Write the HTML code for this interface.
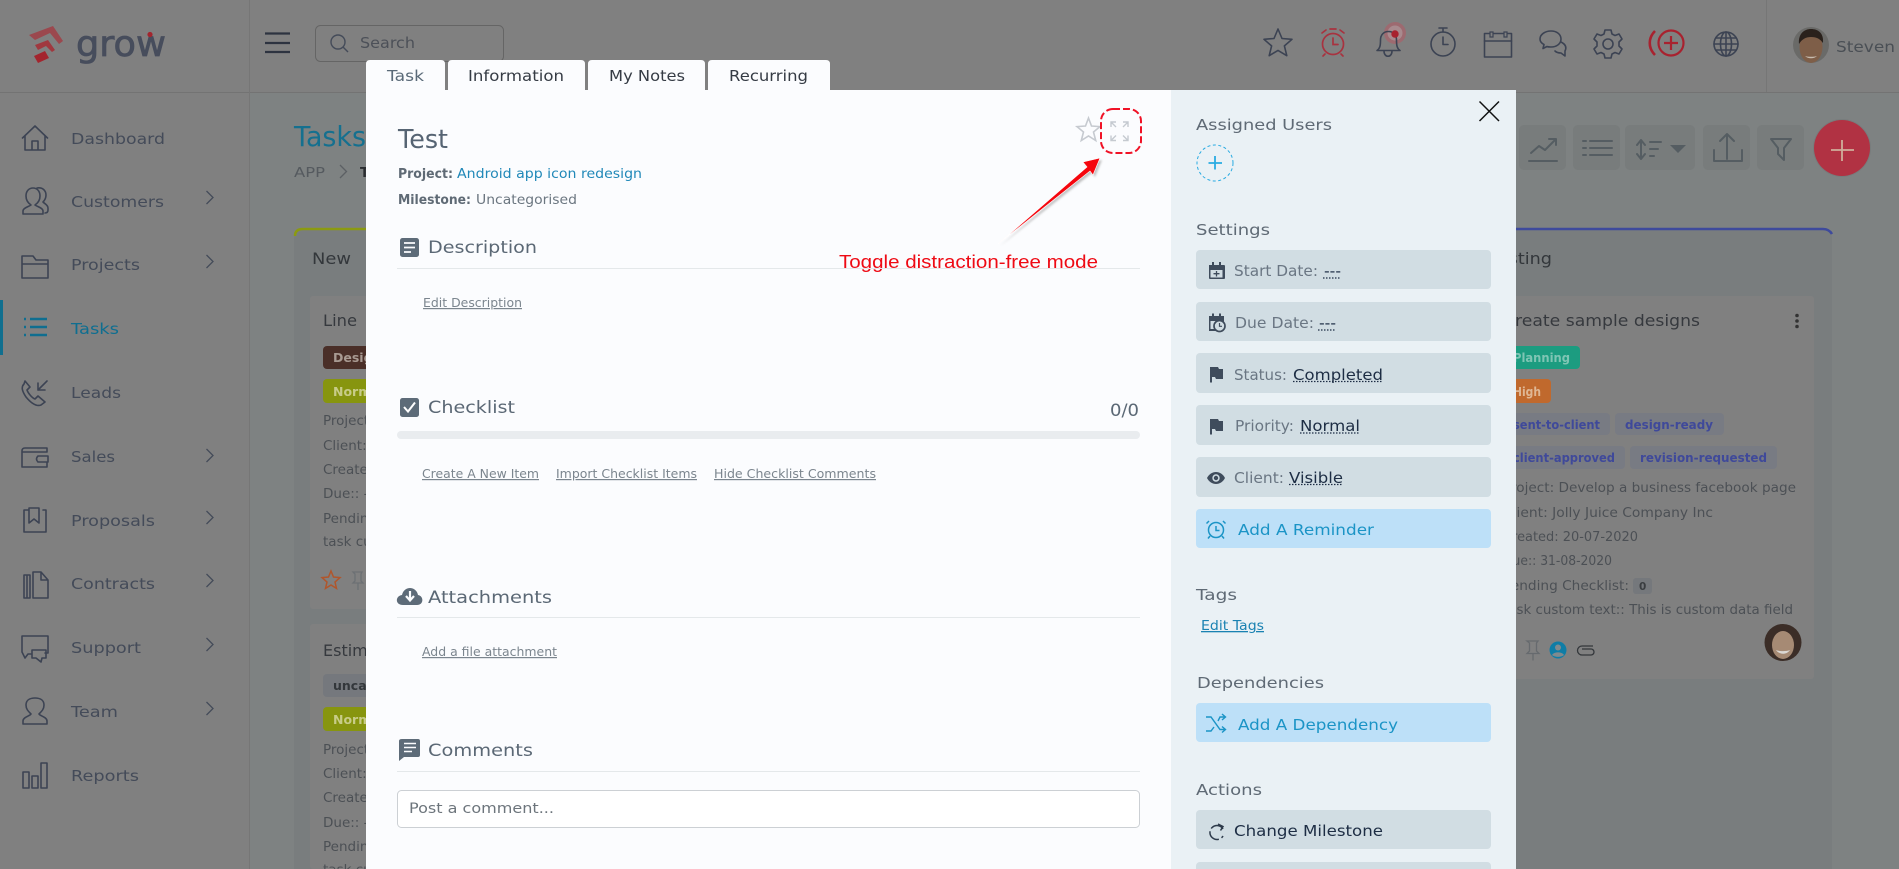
<!DOCTYPE html>
<html lang="en">
<head>
<meta charset="utf-8">
<title>Tasks - Grow</title>
<style>
html,body{margin:0;padding:0;width:1899px;height:869px;overflow:hidden;background:#808080}
svg{display:block}
text{font-family:"DejaVu Sans","Liberation Sans",sans-serif;white-space:pre}
.nav{font-size:15.5px;fill:#444b59}
.cd{font-size:13.5px;fill:#4c5055}
.tg{font-size:12.5px;font-weight:bold}
.sec{font-size:17px;fill:#5b6875}
.side{font-size:15.5px;fill:#5f6a75}
.lk{font-size:12px;fill:#7b858e;text-decoration:underline}
.row{font-size:15.5px;fill:#6a7683}
.val{font-size:15.5px;fill:#1d2d44}
.ic{fill:none;stroke:#3c4353;stroke-width:1.6;stroke-linejoin:round;stroke-linecap:round}
.tb{fill:none;stroke:#555d62;stroke-width:2;stroke-linejoin:round;stroke-linecap:round}
.sd{fill:#3f4c5c}
</style>
</head>
<body>
<svg xmlns="http://www.w3.org/2000/svg" width="1899" height="869" viewBox="0 0 1899 869">
<!-- page behind overlay -->
<rect width="1899" height="869" fill="#808080"/>
<rect x="250" y="93" width="1649" height="776" fill="#7e8282"/>
<rect x="0" y="92" width="1899" height="1" fill="#737373"/>
<rect x="249" y="0" width="1" height="869" fill="#767676"/>
<rect x="1766" y="0" width="1" height="92" fill="#767676"/>

<!-- logo -->
<polygon points="29,35 53,26 63,41 59,44 50,33 35,40" fill="#9b484e"/>
<polygon points="35,45 48,40 55,50 52,52 46,46 38,50" fill="#a0383f"/>
<polygon points="34,56 45,51 49,58 38,63" fill="#a3252e"/>
<text x="76" y="56" font-size="36" fill="#474d5c" stroke="#474d5c" stroke-width=".8" textLength="90" lengthAdjust="spacingAndGlyphs">grow</text>
<circle cx="150" cy="34.500" r="2.600" fill="#a3252e"/>

<!-- hamburger + search -->
<path d="M265 33.500H290M265 43H290M265 52H290" stroke="#2d3340" stroke-width="2.200" fill="none"/>
<rect x="315.500" y="25.500" width="188" height="36" rx="5" fill="none" stroke="#656565"/>
<circle cx="338" cy="42" r="7" fill="none" stroke="#444b59" stroke-width="1.400"/>
<path d="M343 47L348 52" stroke="#444b59" stroke-width="1.400"/>
<text x="360" y="48" font-size="15" fill="#4c5058" textLength="55" lengthAdjust="spacingAndGlyphs">Search</text>

<!-- top icons -->
<path class="ic" d="M1278 29l4 9.500 10 .8-7.600 6.600 2.400 9.800-8.800-5.300-8.800 5.300 2.400-9.800-7.600-6.600 10-.8z"/>
<g fill="none" stroke="#a8323f" stroke-width="1.700" stroke-linecap="round">
<circle cx="1333" cy="44" r="10.500"/><path d="M1333 38v6.500h5M1322 33l4-3M1344 33l-4-3M1325 54l-2 2M1341 54l2 2M1330 29h6"/>
</g>
<circle cx="1395" cy="33" r="11" fill="#9d6a70"/>
<circle cx="1395" cy="33" r="7.500" fill="#a88a8e"/>
<path class="ic" d="M1377 50.500c3-2 3.500-5 3.500-10.500 0-5 3-8.500 8-8.500s8 3.500 8 8.500c0 5.500 .5 8.500 3.500 10.500zM1384 51c0 7 8 7 8 0"/>
<circle cx="1395" cy="34" r="3.700" fill="#a8222f"/>
<circle class="ic" cx="1443" cy="44" r="12"/><path class="ic" d="M1443 37v7.500h5M1439 28h8M1443 28v4"/>
<rect class="ic" x="1484.500" y="33.500" width="27" height="23.500"/><path class="ic" d="M1484.500 41h27"/><path d="M1490 32h3v5h-3zM1504 32h3v5h-3z" fill="#808080" stroke="#3c4353" stroke-width="1.200"/>
<path class="ic" d="M1551 31c6 0 10 3.500 10 8s-4 8-10 8c-1.500 0-3 0-4-.5l-4 2 1-4c-3-1.500-4-3.500-4-5.500 0-4.500 5-8 11-8zM1561 42c4 2 6 5 4 9l0 5-4-3c-3 0-5-1-6-2"/>
<g class="ic"><circle cx="1608" cy="44" r="5"/><path d="M1605 30h6l1 4 3 1.500 4-1.500 3 5-3 3v4l3 3-3 5-4-1.500-3 1.500-1 4h-6l-1-4-3-1.500-4 1.500-3-5 3-3v-4l-3-3 3-5 4 1.500 3-1.500z"/></g>
<g fill="none" stroke="#a8222f" stroke-width="2.200">
<circle cx="1671" cy="43" r="12.500"/><path d="M1671 36v14M1664 43h14"/><path d="M1655 31c-7 7-7 17 0 24" stroke-width="2.600"/>
</g>
<g class="ic" stroke-width="1.400"><circle cx="1726" cy="44" r="12"/><ellipse cx="1726" cy="44" rx="5.500" ry="12"/><path d="M1726 32v24M1714 44h24M1716 38h20M1716 50h20"/></g>
<!-- avatar -->
<circle cx="1811" cy="45" r="18" fill="#6a6a68"/>
<ellipse cx="1811" cy="47" rx="11.500" ry="16" fill="#7e5e48"/>
<path d="M1799 44c-1-10 5-15 12-15s13 4 12 14c-3-4-6-6-12-6-5 0-9 2-12 7z" fill="#2a211c"/>
<path d="M1805 56c3 3 9 3 12 0-3 1-9 1-12 0z" fill="#c8bcb0"/>
<text x="1836" y="52" font-size="15.500" fill="#4a4f55" textLength="59" lengthAdjust="spacingAndGlyphs">Steven</text>

<!-- sidebar -->
<rect x="0" y="300" width="3" height="55" fill="#106f8f"/>
<text class="nav" x="71" y="144" textLength="94" lengthAdjust="spacingAndGlyphs">Dashboard</text>
<text class="nav" x="71" y="207" textLength="93" lengthAdjust="spacingAndGlyphs">Customers</text>
<text class="nav" x="71" y="270" textLength="69" lengthAdjust="spacingAndGlyphs">Projects</text>
<text class="nav" x="71" y="334" textLength="48" lengthAdjust="spacingAndGlyphs" style="fill:#0f6e90">Tasks</text>
<text class="nav" x="71" y="398" textLength="50" lengthAdjust="spacingAndGlyphs">Leads</text>
<text class="nav" x="71" y="462" textLength="44" lengthAdjust="spacingAndGlyphs">Sales</text>
<text class="nav" x="71" y="526" textLength="84" lengthAdjust="spacingAndGlyphs">Proposals</text>
<text class="nav" x="71" y="589" textLength="84" lengthAdjust="spacingAndGlyphs">Contracts</text>
<text class="nav" x="71" y="653" textLength="70" lengthAdjust="spacingAndGlyphs">Support</text>
<text class="nav" x="71" y="717" textLength="47" lengthAdjust="spacingAndGlyphs">Team</text>
<text class="nav" x="71" y="781" textLength="68" lengthAdjust="spacingAndGlyphs">Reports</text>
<g fill="none" stroke="#444b59" stroke-width="1.300">
<path d="M206.500 191l6.500 6.500-6.500 6.500M206.500 255l6.500 6.500-6.500 6.500M206.500 449l6.500 6.500-6.500 6.500M206.500 511l6.500 6.500-6.500 6.500M206.500 574l6.500 6.500-6.500 6.500M206.500 638l6.500 6.500-6.500 6.500M206.500 702l6.500 6.500-6.500 6.500"/>
</g>
<g class="ic">
<path d="M22.500 138L35 126l12.500 12M25 136v14h20v-14M32 150v-9h6v9"/>
<path d="M23 214v-3c0-3 5-4 8-6-3-2-5-5-5-9 0-5 3-8 7-8s7 3 7 8c0 4-2 7-5 9 3 2 8 3 8 6v3zM37 188c6-1 9 3 9 7 0 3-1 5-3 7 2 2 5 3 5 6v2c0 2-1 3-3 3"/>
<path d="M22 278V256h11l3 4h12v18zM22 264h26"/>
<path d="M24 384c-3 3-2 7 2 13 5 6 10 10 15 8l4-3-7-6-3 3c-3-1-7-6-8-9l3-3-5-6zM47 381l-9 9M38 383v7h7"/>
<path d="M47 452v-4H25c-2 0-3 1-3 3v16h25v-5M38 456h10v6H38c-2-2-2-4 0-6zM22 452h25"/>
<path d="M29 510h-5v22h22v-22h-3M29 508v15l5-4 5 4v-15z"/>
<path d="M33 572h8l7 8v18H33zM41 572v8h7M24 575h6v23h-6zM27 575v23"/>
<path d="M22 636h26v17h-3M22 636v16l3 6 3-4h3M32 650h14v8h-4l-1 4-5-4h-4z"/>
<path d="M23 724v-3c0-4 7-5 8-7-3-3-5-5-5-9 0-5 4-7 9-7s9 2 9 7c0 4-2 6-5 9 1 2 8 3 8 7v3z"/>
<path d="M23 772h6v16h-6zM32 776h6v12h-6zM41 763h6v25h-6z"/>
</g>
<path d="M24 319h2M24 327h2M24 335h2M30 319h17M30 327h17M30 335h17" stroke="#0f6e90" stroke-width="2.600" fill="none"/>

<!-- heading -->
<text x="294" y="146" font-size="28" fill="#15708f" textLength="72" lengthAdjust="spacingAndGlyphs">Tasks</text>
<text x="294" y="177" font-size="13.500" fill="#555a5f" textLength="31" lengthAdjust="spacingAndGlyphs">APP</text>
<path d="M340 165l6.500 6.500-6.500 6.500" fill="none" stroke="#5c6064" stroke-width="1.300"/>
<text x="360" y="177" font-size="13.500" font-weight="bold" fill="#2a2d30">T</text>

<!-- column 1 -->
<path d="M294 240q0-11 9-11h360v640H294z" fill="#797d7e"/>
<path d="M295 236q0-7 8-7h70" fill="none" stroke="#8b9a11" stroke-width="2.500"/>
<text x="312" y="264" font-size="16" fill="#33373b" textLength="39" lengthAdjust="spacingAndGlyphs">New</text>
<rect x="310" y="296" width="300" height="313" rx="3" fill="#808080"/>
<text x="323" y="326" font-size="16" fill="#36393e" textLength="34" lengthAdjust="spacingAndGlyphs">Line</text>
<rect x="323" y="346" width="70" height="23" rx="4" fill="#4a2f28"/>
<text class="tg" x="333" y="362" fill="#a89a92">Design</text>
<rect x="323" y="379" width="70" height="24" rx="4" fill="#87950f"/>
<text class="tg" x="333" y="396" fill="#c8cc88">Normal</text>
<text class="cd" x="323" y="425">Project</text>
<text class="cd" x="323" y="450">Client:</text>
<text class="cd" x="323" y="474">Created</text>
<text class="cd" x="323" y="498">Due:: -</text>
<text class="cd" x="323" y="523">Pending</text>
<text class="cd" x="323" y="546">task cu</text>
<path d="M331 571l2.500 6 6.500.6-5 4.400 1.500 6.400-5.500-3.400-5.500 3.400 1.500-6.400-5-4.400 6.500-.6z" fill="none" stroke="#b0562c" stroke-width="1.500"/>
<path d="M353 572h9l-1 2v7l2 2h-5v7-7h-5l2-2v-7z" fill="none" stroke="#6c7074" stroke-width="1.300"/>
<rect x="310" y="624" width="300" height="245" rx="3" fill="#808080"/>
<text x="323" y="656" font-size="16" fill="#36393e">Estim</text>
<rect x="323" y="674" width="70" height="23" rx="4" fill="#75787d"/>
<text class="tg" x="333" y="690" fill="#33373b">uncat</text>
<rect x="323" y="707" width="70" height="24" rx="4" fill="#87950f"/>
<text class="tg" x="333" y="724" fill="#c8cc88">Normal</text>
<text class="cd" x="323" y="754">Project</text>
<text class="cd" x="323" y="778">Client:</text>
<text class="cd" x="323" y="802">Created</text>
<text class="cd" x="323" y="827">Due:: -</text>
<text class="cd" x="323" y="851">Pending</text>
<text class="cd" x="323" y="874">task cu</text>

<!-- toolbar -->
<g fill="#787c7c">
<rect x="1519" y="125" width="47" height="45" rx="5"/>
<rect x="1573" y="125" width="47" height="45" rx="5"/>
<rect x="1625" y="125" width="70" height="45" rx="5"/>
<rect x="1703" y="125" width="47" height="45" rx="5"/>
<rect x="1757" y="125" width="47" height="45" rx="5"/>
</g>
<path class="tb" d="M1529 161h28M1531 153l8-7 6 4 11-11M1549 139h7v6"/>
<path class="tb" d="M1590 141h22M1590 148h22M1590 155h22M1583 141h3M1583 148h3M1583 155h3" stroke-width="2.300"/>
<path class="tb" d="M1641 141v17M1637 145l4-5 4 5M1637 154l4 5 4-5M1650 142h11M1650 149h8M1650 156h4"/>
<polygon points="1670,145 1686,145 1678,153" fill="#555d62"/>
<path class="tb" d="M1727 159v-23M1720 141l7-7 7 7M1714 150v11h28v-11"/>
<path class="tb" d="M1771 139h20l-7 9v12l-6-6v-6z"/>
<circle cx="1842" cy="148" r="29" fill="#6f7575" opacity=".45"/>
<ellipse cx="1842" cy="148" rx="28" ry="28" fill="#b13243"/>
<path d="M1842 140v21M1831 150h23" stroke="#cfae9b" stroke-width="1.800"/>

<!-- right column -->
<path d="M1470 229h353q9 0 9 10v630h-362z" fill="#797d7e"/>
<path d="M1470 229h353q6 0 9 5" fill="none" stroke="#3e4a9c" stroke-width="2.500"/>
<text x="1490" y="264" font-size="16" fill="#33373b" textLength="62" lengthAdjust="spacingAndGlyphs">Testing</text>
<rect x="1490" y="296" width="324" height="383" rx="3" fill="#808080"/>
<text x="1503" y="326" font-size="16" fill="#36393e" textLength="197" lengthAdjust="spacingAndGlyphs">Create sample designs</text>
<g fill="#333"><circle cx="1797" cy="315.500" r="1.800"/><circle cx="1797" cy="321" r="1.800"/><circle cx="1797" cy="326.500" r="1.800"/></g>
<rect x="1503" y="346" width="77" height="23" rx="4" fill="#1c9c80"/>
<text class="tg" x="1513" y="362" fill="#7fc5b4" textLength="57" lengthAdjust="spacingAndGlyphs">Planning</text>
<rect x="1503" y="379" width="48" height="24" rx="4" fill="#c0692d"/>
<text class="tg" x="1513" y="396" fill="#dfb794" textLength="28" lengthAdjust="spacingAndGlyphs">High</text>
<g fill="#787b83">
<rect x="1503" y="413" width="107" height="22" rx="4"/><rect x="1615" y="413" width="109" height="22" rx="4"/>
<rect x="1503" y="446" width="122" height="23" rx="4"/><rect x="1630" y="446" width="147" height="23" rx="4"/>
</g>
<text class="tg" x="1513" y="429" fill="#3f499a" textLength="87" lengthAdjust="spacingAndGlyphs">sent-to-client</text>
<text class="tg" x="1625" y="429" fill="#3f499a" textLength="88" lengthAdjust="spacingAndGlyphs">design-ready</text>
<text class="tg" x="1513" y="462" fill="#3f499a" textLength="102" lengthAdjust="spacingAndGlyphs">client-approved</text>
<text class="tg" x="1640" y="462" fill="#3f499a" textLength="127" lengthAdjust="spacingAndGlyphs">revision-requested</text>
<text class="cd" x="1503" y="492" textLength="293" lengthAdjust="spacingAndGlyphs">Project: Develop a business facebook page</text>
<text class="cd" x="1503" y="517" textLength="210" lengthAdjust="spacingAndGlyphs">Client: Jolly Juice Company Inc</text>
<text class="cd" x="1503" y="541" textLength="135" lengthAdjust="spacingAndGlyphs">Created: 20-07-2020</text>
<text class="cd" x="1503" y="565" textLength="109" lengthAdjust="spacingAndGlyphs">Due:: 31-08-2020</text>
<text class="cd" x="1503" y="590" textLength="126" lengthAdjust="spacingAndGlyphs">Pending Checklist:</text>
<rect x="1633" y="578" width="19" height="16" rx="3" fill="#75787c"/>
<text x="1639" y="590" font-size="10.500" font-weight="bold" fill="#3a3d40">0</text>
<text class="cd" x="1503" y="614" textLength="290" lengthAdjust="spacingAndGlyphs">task custom text:: This is custom data field</text>
<path d="M1527 641h11l-1.500 2v8l2.500 2.500h-6v7-7h-6l2.500-2.500v-8z" fill="none" stroke="#666a6e" stroke-width="1.300"/>
<circle cx="1558" cy="650" r="8.500" fill="#0f7da6"/>
<circle cx="1558" cy="647.500" r="3" fill="#808a8e"/>
<path d="M1552 655c2-3.500 10-3.500 12 0-3 2.500-9 2.500-12 0z" fill="#808a8e"/>
<path d="M1593 646h-11a4.500 4.500 0 000 9h9a3 3 0 000-6h-9" fill="none" stroke="#33373b" stroke-width="1.300"/>
<circle cx="1783" cy="642.500" r="18.500" fill="#3b2d27"/>
<ellipse cx="1783" cy="645" rx="11" ry="14" fill="#a68a74"/>
<path d="M1776 650c3 5 11 5 14 0-3 1.500-11 1.500-14 0z" fill="#dcd8d4"/>

<!-- modal tabs -->
<g fill="#fbfcfe">
<path d="M366 90V64q0-4 4-4h71q4 0 4 4v26z"/>
<path d="M448 90V64q0-4 4-4h129q4 0 4 4v26z"/>
<path d="M588 90V64q0-4 4-4h109q4 0 4 4v26z"/>
<path d="M708 90V64q0-4 4-4h114q4 0 4 4v26z"/>
</g>
<text x="387" y="81" font-size="15" fill="#5a6a78" textLength="37" lengthAdjust="spacingAndGlyphs">Task</text>
<text x="468" y="81" font-size="15" fill="#353b44" textLength="96" lengthAdjust="spacingAndGlyphs">Information</text>
<text x="609" y="81" font-size="15" fill="#353b44" textLength="76" lengthAdjust="spacingAndGlyphs">My Notes</text>
<text x="729" y="81" font-size="15" fill="#353b44" textLength="79" lengthAdjust="spacingAndGlyphs">Recurring</text>

<!-- modal main -->
<rect x="366" y="90" width="805" height="779" fill="#fbfcfe"/>
<rect x="1171" y="90" width="345" height="779" fill="#eaf1f5"/>

<text x="398" y="148" font-size="26" fill="#566473" textLength="50" lengthAdjust="spacingAndGlyphs">Test</text>
<text x="398" y="178" font-size="13.500" font-weight="bold" fill="#5f6a75" textLength="55" lengthAdjust="spacingAndGlyphs">Project:</text>
<text x="457" y="178" font-size="13.500" fill="#2088b8" textLength="185" lengthAdjust="spacingAndGlyphs">Android app icon redesign</text>
<text x="398" y="204" font-size="13.500" font-weight="bold" fill="#5f6a75" textLength="73" lengthAdjust="spacingAndGlyphs">Milestone:</text>
<text x="476" y="204" font-size="13.500" fill="#6b7680" textLength="101" lengthAdjust="spacingAndGlyphs">Uncategorised</text>

<!-- star + expand + annotation -->
<path d="M1088.500 118l3 8 8.500.6-6.500 5.400 2.200 8.500-7.200-4.600-7.200 4.600 2.200-8.500-6.500-5.400 8.500-.6z" fill="none" stroke="#c6cad0" stroke-width="1.600"/>
<path d="M1111 127v-5h5M1128 127v-5h-5M1111 135.500v5h5M1128 135.500v5h-5M1111 122l5 5M1128 122l-5 5M1111 140.500l5-5M1128 140.500l-5-5" fill="none" stroke="#c5cad0" stroke-width="1.400"/>
<rect x="1101" y="109" width="40" height="44" rx="12" fill="none" stroke="#f01226" stroke-width="2" stroke-dasharray="7 3"/>
<polygon points="998,244 1087,167 1083,162 1100,158 1093,175 1090,171" fill="#9a9a9a" opacity=".6" transform="translate(2 2)" style="filter:blur(1px)"/>
<polygon points="998,244 1087,167 1083,162 1100,158 1093,175 1090,171" fill="#f5060e" stroke="#fff" stroke-width=".6"/>
<text x="839" y="268" font-size="18" fill="#ee0a14" style="font-family:'Liberation Sans',Arial,sans-serif" textLength="259" lengthAdjust="spacingAndGlyphs">Toggle distraction-free mode</text>

<!-- description -->
<rect x="400" y="238" width="19" height="19" rx="2.500" fill="#5d6b78"/>
<path d="M404 243h11M404 247.500h11M404 252h7" stroke="#fbfcfe" stroke-width="1.800"/>
<text class="sec" x="428" y="253" textLength="109" lengthAdjust="spacingAndGlyphs">Description</text>
<rect x="397" y="268" width="743" height="1" fill="#e4e8ea"/>
<text class="lk" x="423" y="307" textLength="99" lengthAdjust="spacingAndGlyphs">Edit Description</text>

<!-- checklist -->
<rect x="400" y="398" width="19" height="19" rx="2.500" fill="#5d6b78"/>
<path d="M404 407l4 4.500 7-9" fill="none" stroke="#fff" stroke-width="2"/>
<text class="sec" x="428" y="413" textLength="87" lengthAdjust="spacingAndGlyphs">Checklist</text>
<text x="1110" y="416" font-size="17" fill="#5b6875" textLength="29" lengthAdjust="spacingAndGlyphs">0/0</text>
<rect x="397" y="431" width="743" height="8" rx="4" fill="#e9ecef"/>
<text class="lk" x="422" y="478" textLength="117" lengthAdjust="spacingAndGlyphs">Create A New Item</text>
<text class="lk" x="556" y="478" textLength="141" lengthAdjust="spacingAndGlyphs">Import Checklist Items</text>
<text class="lk" x="714" y="478" textLength="162" lengthAdjust="spacingAndGlyphs">Hide Checklist Comments</text>

<!-- attachments -->
<path d="M403 605c-8 0-8-9-1-10 1-5 5-7 8-7s7 2 8 7c6 1 6 10-1 10z" fill="#5d6b78"/>
<path d="M410 591v8M406 596l4 4.500 4-4.500" stroke="#fbfcfe" stroke-width="2.200" fill="none"/>
<text class="sec" x="428" y="603" textLength="124" lengthAdjust="spacingAndGlyphs">Attachments</text>
<rect x="397" y="617" width="743" height="1" fill="#e4e8ea"/>
<text class="lk" x="422" y="656" textLength="135" lengthAdjust="spacingAndGlyphs">Add a file attachment</text>

<!-- comments -->
<path d="M402 739h16q2 0 2 2v14q0 2-2 2h-14l-5 4v-20q0-2 3-2z" fill="#5d6b78"/>
<path d="M404 743.500h12M404 747.500h12M404 751.500h8" stroke="#fbfcfe" stroke-width="1.600"/>
<text class="sec" x="428" y="756" textLength="105" lengthAdjust="spacingAndGlyphs">Comments</text>
<rect x="397" y="771" width="743" height="1" fill="#e4e8ea"/>
<rect x="397.500" y="790.500" width="742" height="37" rx="4" fill="#fff" stroke="#ccd0d4"/>
<text x="409" y="813" font-size="14.500" fill="#6d757c" textLength="145" lengthAdjust="spacingAndGlyphs">Post a comment...</text>

<!-- aside -->
<path d="M1479.500 101.500l19.500 19.500M1499 101.500l-19.500 19.500" stroke="#111" stroke-width="1.500"/>
<text class="side" x="1196" y="130" textLength="136" lengthAdjust="spacingAndGlyphs">Assigned Users</text>
<circle cx="1215" cy="163" r="18" fill="none" stroke="#29abe2" stroke-width="1" stroke-dasharray="3 2.500"/>
<path d="M1215 156v13.500M1208.500 163h13.500" stroke="#29abe2" stroke-width="1.800"/>
<text class="side" x="1196" y="235" textLength="74" lengthAdjust="spacingAndGlyphs">Settings</text>

<g fill="#d1dde3">
<rect x="1196" y="250" width="295" height="39" rx="4"/>
<rect x="1196" y="302" width="295" height="39" rx="4"/>
<rect x="1196" y="353" width="295" height="40" rx="4"/>
<rect x="1196" y="405" width="295" height="40" rx="4"/>
<rect x="1196" y="457" width="295" height="40" rx="4"/>
<rect x="1196" y="810" width="295" height="39" rx="4"/>
<rect x="1196" y="862" width="295" height="20" rx="4"/>
</g>
<g fill="#bde0f8">
<rect x="1196" y="509" width="295" height="39" rx="4"/>
<rect x="1196" y="703" width="295" height="39" rx="4"/>
</g>

<text class="row" x="1234" y="276" textLength="84" lengthAdjust="spacingAndGlyphs">Start Date:</text>
<text class="val" x="1324" y="276" textLength="17" lengthAdjust="spacingAndGlyphs">---</text>
<text class="row" x="1235" y="328" textLength="79" lengthAdjust="spacingAndGlyphs">Due Date:</text>
<text class="val" x="1319" y="328" textLength="17" lengthAdjust="spacingAndGlyphs">---</text>
<text class="row" x="1234" y="380" textLength="53" lengthAdjust="spacingAndGlyphs">Status:</text>
<text class="val" x="1293" y="380" textLength="90" lengthAdjust="spacingAndGlyphs">Completed</text>
<text class="row" x="1235" y="431" textLength="59" lengthAdjust="spacingAndGlyphs">Priority:</text>
<text class="val" x="1300" y="431" textLength="60" lengthAdjust="spacingAndGlyphs">Normal</text>
<text class="row" x="1234" y="483" textLength="50" lengthAdjust="spacingAndGlyphs">Client:</text>
<text class="val" x="1289" y="483" textLength="54" lengthAdjust="spacingAndGlyphs">Visible</text>
<g stroke="#1d2d44" stroke-width="1.200" stroke-dasharray="1.500 1.500">
<path d="M1323 278h18M1318 330h18M1293 381.500h90M1300 433h60M1289 484.500h54"/>
</g>
<!-- row icons -->
<path class="sd" fill-rule="evenodd" d="M1209 265h3v-3h2v3h5v-3h2v3h3q1 0 1 1v12q0 1-1 1h-14q-1 0-1-1v-12q0-1 0-1zm1.500 5v7.500h12v-7.500z"/>
<path d="M1216.500 271v5.500M1213.500 273.700h6" stroke="#3f4c5c" stroke-width="1.300"/>
<path class="sd" fill-rule="evenodd" d="M1209 316h3v-2.500h2v2.500h5v-2.500h2v2.500h3v6h-2v-1h-11.500v8h5v2h-6.500z"/>
<circle cx="1219.500" cy="326" r="5.500" fill="#d1dde3" stroke="#3f4c5c" stroke-width="1.700"/>
<path d="M1219.500 323v3.300h2.500" fill="none" stroke="#3f4c5c" stroke-width="1.200"/>
<path class="sd" d="M1210 367h8l1 2h4v10h-7l-1-2h-3v5.500h-2z"/>
<path class="sd" d="M1210 419h8l1 2h4v10h-7l-1-2h-3v5.500h-2z"/>
<path class="sd" d="M1207 478c4-8 14-8 18 0-4 8-14 8-18 0z"/>
<circle cx="1216" cy="478" r="3.700" fill="#d1dde3"/>
<circle cx="1216" cy="478" r="2.200" fill="#3f4c5c"/>

<text x="1238" y="535" font-size="15.500" fill="#1b94c6" textLength="136" lengthAdjust="spacingAndGlyphs">Add A Reminder</text>
<g fill="none" stroke="#1b94c6" stroke-width="1.500">
<circle cx="1216" cy="530" r="7.500"/><path d="M1216 526v4.500h3.500M1209 521l-2.500 2.500M1223 521l2.500 2.500M1210 536l-2 2.500M1222 536l2 2.500"/>
</g>
<text class="side" x="1196" y="600" textLength="41" lengthAdjust="spacingAndGlyphs">Tags</text>
<text x="1201" y="630" font-size="13" fill="#1a82b2" text-decoration="underline" textLength="63" lengthAdjust="spacingAndGlyphs">Edit Tags</text>
<text class="side" x="1197" y="688" textLength="127" lengthAdjust="spacingAndGlyphs">Dependencies</text>
<text x="1238" y="730" font-size="15.500" fill="#1b94c6" textLength="160" lengthAdjust="spacingAndGlyphs">Add A Dependency</text>
<path d="M1206 717h5l9 12.500h5M1206 731h5l3-4M1218 721l2-4h5M1222 714l3.500 3-3.500 3M1222 726.500l3.500 3-3.500 3" fill="none" stroke="#1b94c6" stroke-width="1.400"/>
<text class="side" x="1196" y="795" textLength="66" lengthAdjust="spacingAndGlyphs">Actions</text>
<text x="1234" y="836" font-size="15.500" fill="#1d2d44" textLength="149" lengthAdjust="spacingAndGlyphs">Change Milestone</text>
<path d="M1223 829a7 7 0 1 0 0 7" fill="none" stroke="#2d3a4a" stroke-width="1.500" stroke-dasharray="14 3"/>
<path d="M1218 824l5 2.500-2.500 4" fill="none" stroke="#2d3a4a" stroke-width="1.500"/>
</svg>
</body>
</html>
